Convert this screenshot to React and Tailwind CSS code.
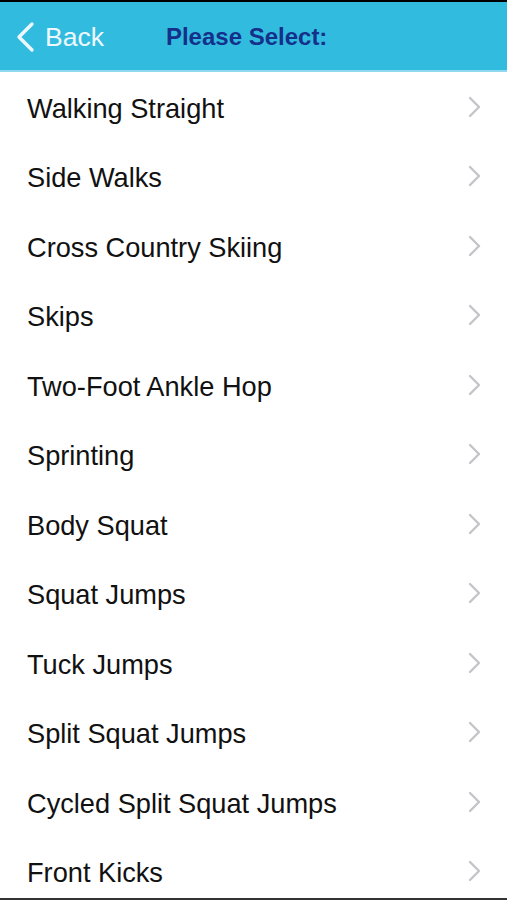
import React from 'react';

const items = [
  'Walking Straight',
  'Side Walks',
  'Cross Country Skiing',
  'Skips',
  'Two-Foot Ankle Hop',
  'Sprinting',
  'Body Squat',
  'Squat Jumps',
  'Tuck Jumps',
  'Split Squat Jumps',
  'Cycled Split Squat Jumps',
  'Front Kicks',
];

const Chevron = () => (
  <svg width="14" height="22" viewBox="0 0 14 22" fill="none">
    <path d="M2 2 L11 11 L2 20" stroke="#c4c4c9" strokeWidth="2.4" strokeLinecap="round" strokeLinejoin="round" />
  </svg>
);

export default function App() {
  return (
    <div className="h-[900px] w-[507px] flex flex-col bg-white overflow-hidden" style={{ fontFamily: '"Liberation Sans", Arial, sans-serif' }}>
      {/* Top edge + nav bar */}
      <div className="h-[2px] bg-black" />
      <div className="h-[68px] bg-[#31bcdf] flex items-center pt-[2px]">
        <div className="flex items-center pl-[14px]">
          <svg width="22" height="32" viewBox="0 0 22 32" fill="none">
            <path d="M18 3 L5 16 L18 29" stroke="#eef8fc" strokeWidth="3.4" strokeLinecap="round" strokeLinejoin="round" />
          </svg>
          <span className="ml-[9px] text-[26.5px] text-[#eef8fc] leading-none">Back</span>
        </div>
        <span className="ml-[62px] text-[24px] font-bold text-[#15308a] leading-none">Please Select:</span>
      </div>
      <div className="h-[2px] bg-[#8fd8ee]" />

      {/* List */}
      <div className="flex-1 overflow-hidden">
        {items.map((item) => (
          <div key={item} className="h-[69.5px] flex items-center justify-between pl-[27px] pr-[25px]">
            <span className="pt-[3px] text-[27.2px] text-[#111] leading-none">{item}</span>
            <Chevron />
          </div>
        ))}
      </div>
      <div className="h-[2px] bg-[#333]" />
    </div>
  );
}
